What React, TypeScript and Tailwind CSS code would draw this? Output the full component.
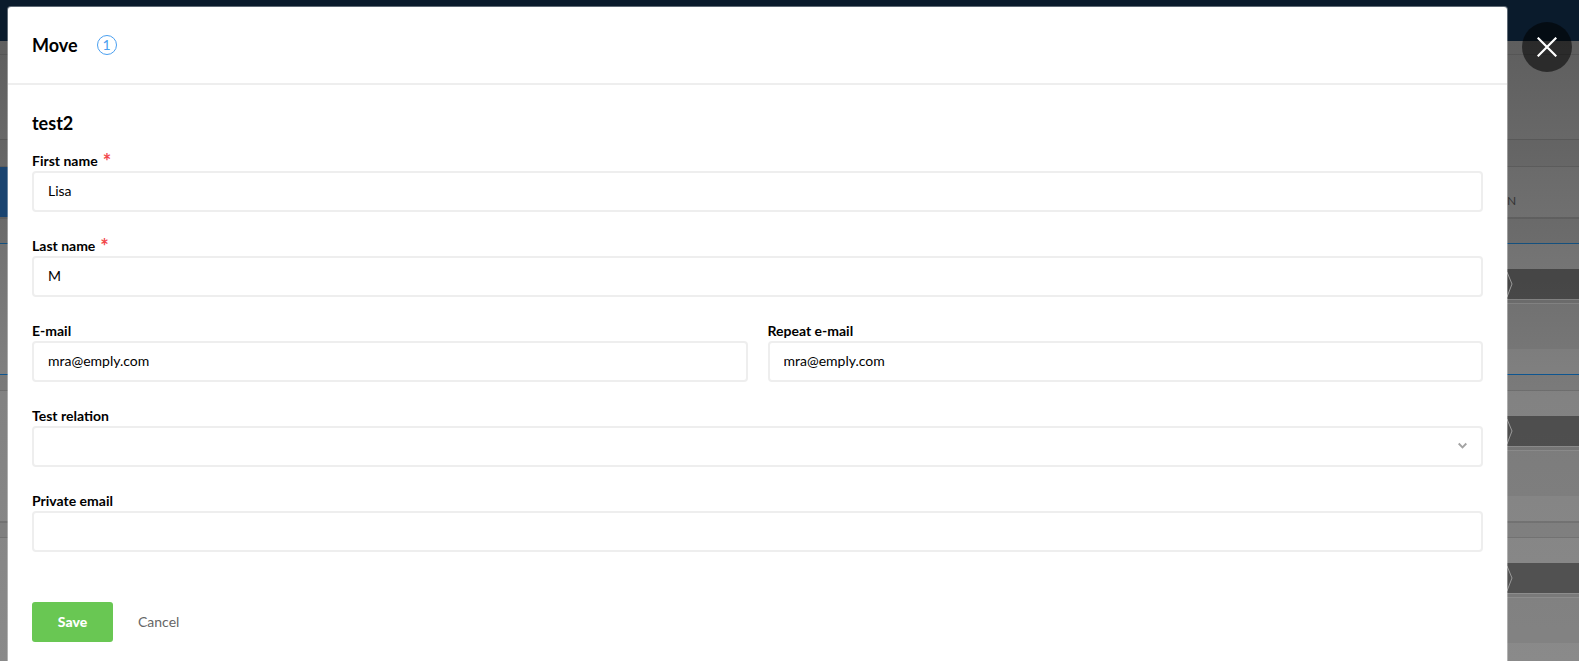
import type { ReactNode } from "react";

const labelClass = "flex h-[22px] pt-[2px] text-sm leading-5 font-bold text-black";
const controlClass =
  "block h-[41px] w-full rounded-[4px] border-2 border-[#eeeeee] bg-white px-[14px] pb-[2px] text-sm text-black outline-none focus:border-[#4a9ff0]";

type FieldProps = {
  id: string;
  label: string;
  required?: boolean;
  children: ReactNode;
};

function Field({ id, label, required, children }: FieldProps) {
  return (
    <div className="min-w-0 flex-1">
      <label htmlFor={id} className={labelClass}>
        {label}
        {required && <span className="ml-[5px] text-xl leading-5 text-[#f2484b]">*</span>}
      </label>
      {children}
    </div>
  );
}

function StageRow() {
  return (
    <div className="flex h-[80px] shrink-0">
      <div className="grow" />
      <div className="flex w-[72px] flex-col">
        <div className="h-[30px] bg-black/40">
          <svg className="h-[30px] w-[6px]" viewBox="0 0 6 30" fill="none" stroke="#9a9a9a">
            <path d="M0 3 L5 15 L0 28" />
          </svg>
        </div>
        <div className="h-[5px] border-y border-white/15 bg-black/10" />
        <div className="h-[45px] bg-black/5" />
      </div>
    </div>
  );
}

function Backdrop() {
  return (
    <div
      aria-hidden="true"
      className="absolute inset-0 flex flex-col overflow-hidden bg-linear-to-b from-[#5a5a5a] via-[#828282] via-60% to-[#8a8a8a]"
    >
      <div className="h-[41px] shrink-0 bg-[#0a1b2c]" />
      <div className="h-[14px] shrink-0 border-b border-black/10" />
      <div className="h-[85px] shrink-0 border-b border-black/15" />
      <div className="h-[27px] shrink-0 border-b border-black/10 bg-black/3" />
      <div className="flex h-[50px] shrink-0 items-center justify-between">
        <div className="h-full w-[72px] bg-[#1a4470]" />
        <div className="w-[72px] pt-[17px] text-xs leading-3 text-[#333333]">N</div>
      </div>
      <div className="h-[26px] shrink-0 border-t-2 border-black/10 bg-black/5" />
      <div className="h-px shrink-0 bg-[#14507e]" />
      <div className="h-[25px] shrink-0" />
      <StageRow />
      <div className="h-[25px] shrink-0" />
      <div className="h-px shrink-0 bg-[#0d5590]" />
      <div className="h-[16px] shrink-0 border-b border-black/10 bg-black/5" />
      <div className="h-[25px] shrink-0" />
      <StageRow />
      <div className="h-[25px] shrink-0" />
      <div className="h-[17px] shrink-0 border-t-2 border-b border-black/10 bg-black/5" />
      <div className="h-[25px] shrink-0" />
      <StageRow />
      <div className="grow" />
    </div>
  );
}

export default function App() {
  return (
    <div className="relative flex min-h-screen items-stretch font-['Lato','Liberation_Sans',sans-serif]">
      <Backdrop />
      <main
        role="dialog"
        aria-labelledby="dialog-title"
        className="relative mt-[7px] ml-2 min-w-0 flex-1 rounded-t-[3px] bg-white shadow-[0_0_0_1px_rgba(255,255,255,0.35)]"
      >
        <header className="flex h-[78px] items-center gap-[19px] border-b-2 border-[#eeeeee] px-6">
          <h1 id="dialog-title" className="text-lg leading-6 font-bold text-black">
            Move
          </h1>
          <span className="flex size-5 items-center justify-center rounded-full border border-[#4a9ff0] text-sm leading-4 text-[#4a9ff0]">
            1
          </span>
        </header>
        <form className="px-6 pt-[26px] pb-5" onSubmit={(e) => e.preventDefault()}>
          <h2 className="mb-[14px] text-lg leading-6 font-bold text-black">test2</h2>
          <div className="flex flex-col gap-[22px]">
            <Field id="first" label="First name" required>
              <input id="first" className={controlClass} defaultValue="Lisa" />
            </Field>
            <Field id="last" label="Last name" required>
              <input id="last" className={controlClass} defaultValue="M" />
            </Field>
            <div className="flex gap-5">
              <Field id="email" label="E-mail">
                <input id="email" type="email" className={controlClass} defaultValue="mra@emply.com" />
              </Field>
              <Field id="email2" label="Repeat e-mail">
                <input id="email2" type="email" className={controlClass} defaultValue="mra@emply.com" />
              </Field>
            </div>
            <Field id="relation" label="Test relation">
              <div className="relative">
                <select id="relation" className={`${controlClass} appearance-none`} defaultValue="">
                  <option value=""></option>
                </select>
                <svg
                  className="pointer-events-none absolute top-4 right-4 h-2 w-[9px]"
                  viewBox="0 0 9 8"
                  fill="none"
                  stroke="#a3a3a3"
                  strokeWidth="1.9"
                >
                  <path d="M0.7 1.5 L4.5 5.4 L8.3 1.5" />
                </svg>
              </div>
            </Field>
            <Field id="private" label="Private email">
              <input id="private" type="email" className={controlClass} />
            </Field>
          </div>
          <div className="mt-[50px] flex items-center gap-[25px]">
            <button type="submit" className="h-10 w-[81px] rounded-[3px] bg-[#69c753] text-sm font-black text-white">
              Save
            </button>
            <button type="button" className="text-sm leading-5 text-[#666666]">
              Cancel
            </button>
          </div>
        </form>
      </main>
      <div className="relative w-[72px] shrink-0 pt-[22px] pl-[15px]">
        <button
          type="button"
          aria-label="Close"
          className="flex size-[50px] items-center justify-center rounded-full bg-black/55"
        >
          <svg className="size-5" viewBox="0 0 20 20" fill="none" stroke="white" strokeWidth="2.2">
            <path d="M0.7 0.7 L19.3 19.3 M19.3 0.7 L0.7 19.3" />
          </svg>
        </button>
      </div>
    </div>
  );
}
